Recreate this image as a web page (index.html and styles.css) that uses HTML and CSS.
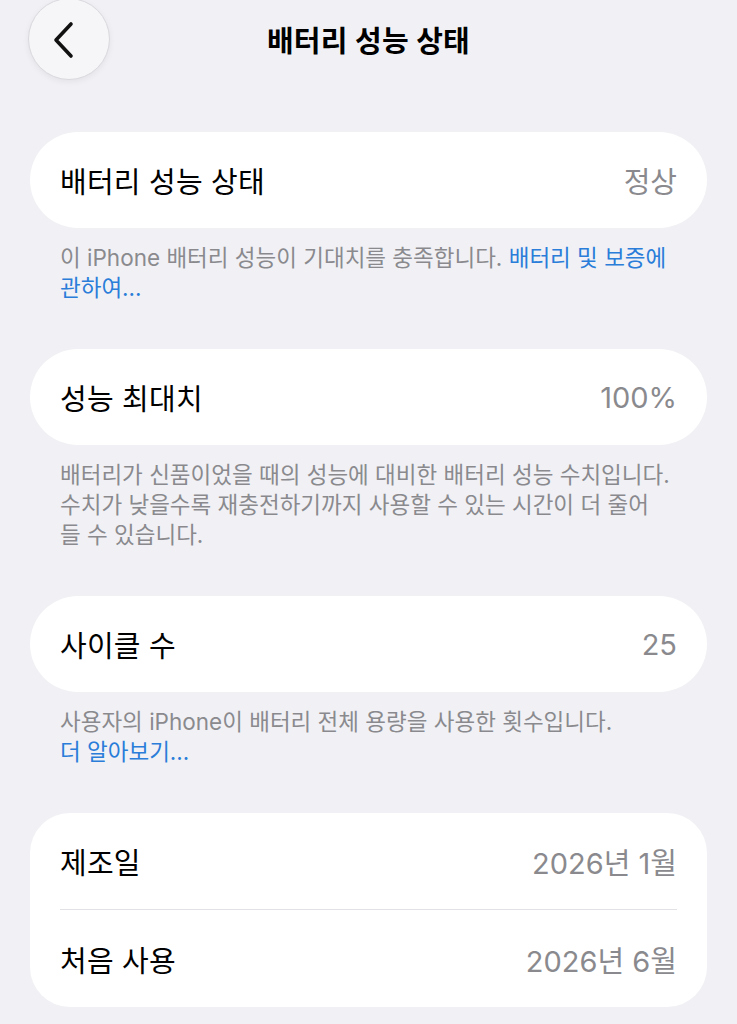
FILE: index.html
```html
<!DOCTYPE html>
<html lang="ko">

<head>
    <meta charset="UTF-8">
    <meta name="viewport" content="width=device-width, initial-scale=1.0">
    <title>배터리 성능 상태</title>
    <link rel="stylesheet" href="styles.css">
</head>

<body>
    <header class="nav">
        <button class="back" aria-label="뒤로">
            <svg width="34" height="40" viewBox="0 0 34 40">
                <path d="M23 5 L8 21 L23 37" fill="none" stroke="#111"
                      stroke-width="3.6" stroke-linecap="round" stroke-linejoin="round"/>
            </svg>
        </button>
        <h1 class="title">배터리 성능 상태</h1>
        <span></span>
    </header>

    <main class="list">
        <section class="group">
            <div class="card">
                <div class="row">
                    <span class="label">배터리 성능 상태</span>
                    <span class="value">정상</span>
                </div>
            </div>
            <p class="footer">
                이 iPhone 배터리 성능이 기대치를 충족합니다. <a href="#">배터리 및 보증에<br>관하여...</a>
            </p>
        </section>

        <section class="group">
            <div class="card">
                <div class="row">
                    <span class="label">성능 최대치</span>
                    <span class="value">100%</span>
                </div>
            </div>
            <p class="footer">
                배터리가 신품이었을 때의 성능에 대비한 배터리 성능 수치입니다.<br>
                수치가 낮을수록 재충전하기까지 사용할 수 있는 시간이 더 줄어<br>
                들 수 있습니다.
            </p>
        </section>

        <section class="group">
            <div class="card">
                <div class="row">
                    <span class="label">사이클 수</span>
                    <span class="value">25</span>
                </div>
            </div>
            <p class="footer">
                사용자의 iPhone이 배터리 전체 용량을 사용한 횟수입니다.<br>
                <a href="#">더 알아보기...</a>
            </p>
        </section>

        <section class="group">
            <div class="card card-multi">
                <div class="row">
                    <span class="label">제조일</span>
                    <span class="value">2026년 1월</span>
                </div>
                <div class="row">
                    <span class="label">처음 사용</span>
                    <span class="value">2026년 6월</span>
                </div>
            </div>
        </section>
    </main>
</body>

</html>
```

FILE: styles.css
```css
* {
    margin: 0;
    padding: 0;
    box-sizing: border-box;
}

body {
    font-family: "Inter", "Noto Sans CJK KR", sans-serif;
    background-color: #f1f1f5;
    color: #000;
    overflow: hidden;
}

.nav {
    display: grid;
    grid-template-columns: 1fr auto 1fr;
    align-items: center;
    height: 82px;
    margin-top: -2px;
    padding-left: 28px;
}

.back {
    width: 82px;
    height: 82px;
    border-radius: 50%;
    border: 1px solid #d9d9de;
    background-color: #f6f6f8;
    box-shadow: 0 2px 6px rgba(0, 0, 0, 0.06);
    display: flex;
    align-items: center;
    justify-content: center;
    padding-right: 8px;
}

.title {
    font-size: 29px;
    font-weight: 700;
    letter-spacing: 0.3px;
    transform: translateX(-14px);
}

.list {
    padding: 52px 30px 0;
}

.group {
    margin-bottom: 46px;
}

.card {
    background-color: #fff;
    border-radius: 48px;
    padding: 0 30px;
}

.card-multi {
    border-radius: 40px;
}

.row {
    display: flex;
    justify-content: space-between;
    align-items: center;
    height: 96px;
}

.card-multi .row + .row {
    border-top: 1px solid #e2e2e6;
    height: 98px;
}

.label {
    font-size: 29px;
    letter-spacing: 0.2px;
}

.value {
    font-size: 29px;
    color: #8a8a8e;
}

.footer {
    margin-top: 15px;
    padding: 0 30px;
    font-size: 22.5px;
    line-height: 30px;
    color: #8a8a8e;
}

.footer a {
    color: #2a7dd9;
    text-decoration: none;
}
```
